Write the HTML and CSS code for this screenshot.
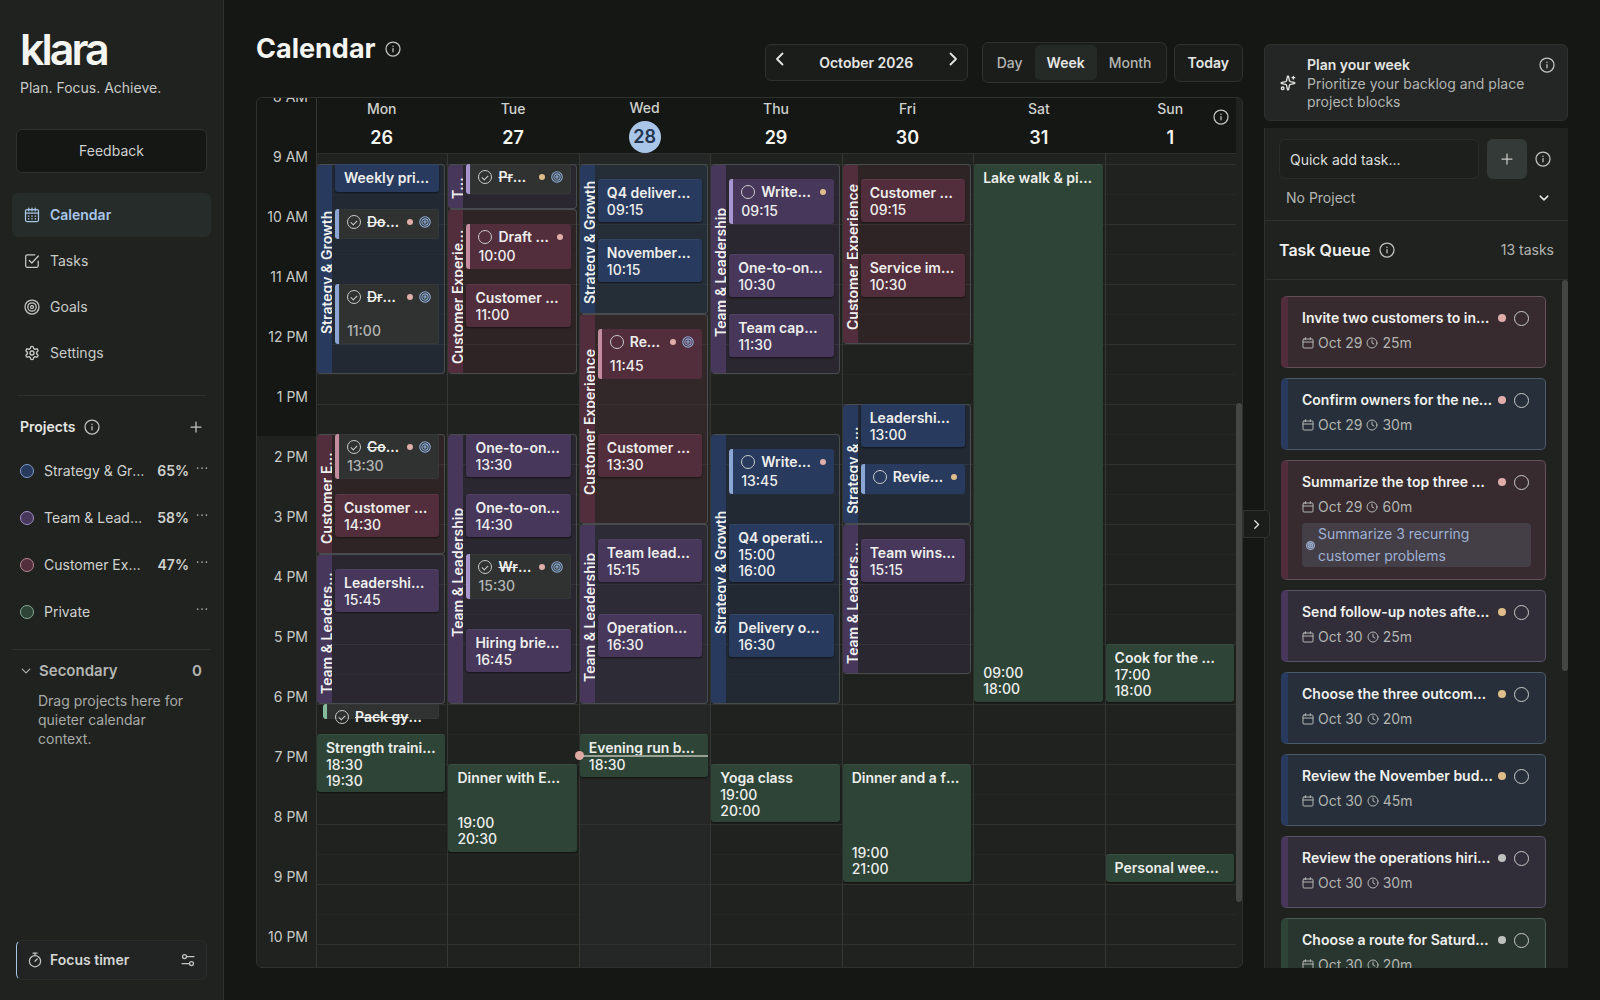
FILE: index.html
```html
<!DOCTYPE html>
<html lang="en">
<head>
<meta charset="utf-8">
<meta name="viewport" content="width=device-width, initial-scale=1">
<title>Klara – Calendar</title>
<link rel="stylesheet" href="styles.css">
</head>
<body>
<svg class="sprite" aria-hidden="true">
  <symbol id="i-info" viewBox="0 0 16 16"><circle cx="8" cy="8" r="7"/><path d="M8 7.5v3.3M8 5.2v.3"/></symbol>
  <symbol id="i-target" viewBox="0 0 16 16"><circle cx="8" cy="8" r="7"/><circle cx="8" cy="8" r="4.2"/><circle cx="8" cy="8" r="1.5"/></symbol>
  <symbol id="i-calendar" viewBox="0 0 16 16"><rect x="1.5" y="2.5" width="13" height="12" rx="1.5"/><path d="M1.5 6.2h13M4.8 1v3M8 1v3M11.2 1v3M4.3 9h.6M7.7 9h.6M11.1 9h.6M4.3 11.8h.6M7.7 11.8h.6M11.1 11.8h.6"/></symbol>
  <symbol id="i-check-square" viewBox="0 0 16 16"><path d="M14.2 8v4.8a1.5 1.5 0 0 1-1.5 1.5H3.2a1.5 1.5 0 0 1-1.5-1.5V3.3a1.5 1.5 0 0 1 1.5-1.5h7.6M5.3 7.5l2.5 2.5 6.6-7"/></symbol>
  <symbol id="i-gear" viewBox="0 0 24 24"><path d="M12.22 2h-.44a2 2 0 0 0-2 2v.18a2 2 0 0 1-1 1.73l-.43.25a2 2 0 0 1-2 0l-.15-.08a2 2 0 0 0-2.73.73l-.22.38a2 2 0 0 0 .73 2.73l.15.1a2 2 0 0 1 1 1.72v.51a2 2 0 0 1-1 1.74l-.15.09a2 2 0 0 0-.73 2.73l.22.38a2 2 0 0 0 2.73.73l.15-.08a2 2 0 0 1 2 0l.43.25a2 2 0 0 1 1 1.73V20a2 2 0 0 0 2 2h.44a2 2 0 0 0 2-2v-.18a2 2 0 0 1 1-1.73l.43-.25a2 2 0 0 1 2 0l.15.08a2 2 0 0 0 2.73-.73l.22-.39a2 2 0 0 0-.73-2.73l-.15-.08a2 2 0 0 1-1-1.74v-.5a2 2 0 0 1 1-1.74l.15-.09a2 2 0 0 0 .73-2.73l-.22-.38a2 2 0 0 0-2.73-.73l-.15.08a2 2 0 0 1-2 0l-.43-.25a2 2 0 0 1-1-1.73V4a2 2 0 0 0-2-2z"/><circle cx="12" cy="12" r="3"/></symbol>
  <symbol id="i-plus" viewBox="0 0 16 16"><path d="M8 3v10M3 8h10"/></symbol>
  <symbol id="i-left" viewBox="0 0 16 16"><path d="M10.5 2.5L5 8l5.5 5.5"/></symbol>
  <symbol id="i-right" viewBox="0 0 16 16"><path d="M5.5 2.5L11 8l-5.5 5.5"/></symbol>
  <symbol id="i-down" viewBox="0 0 16 16"><path d="M3 5.5l5 5 5-5"/></symbol>
  <symbol id="i-dots" viewBox="0 0 16 16"><circle cx="3" cy="8" r="1"/><circle cx="8" cy="8" r="1"/><circle cx="13" cy="8" r="1"/></symbol>
  <symbol id="i-timer" viewBox="0 0 16 16"><circle cx="8" cy="9.2" r="5.6"/><path d="M6 1.2h4M8 1.2v2.2M8 9.2l2.2-2.2"/></symbol>
  <symbol id="i-sliders" viewBox="0 0 16 16"><circle cx="4.5" cy="4.5" r="2"/><circle cx="11.5" cy="11.5" r="2"/><path d="M6.5 4.5H14M2 11.5h7.5"/></symbol>
  <symbol id="i-sparkles" viewBox="0 0 24 24"><path d="M11 2.8a1 1 0 0 1 2 0l1.1 5.6a2 2 0 0 0 1.5 1.5l5.6 1.1a1 1 0 0 1 0 2l-5.6 1.1a2 2 0 0 0-1.5 1.5L13 21.2a1 1 0 0 1-2 0l-1.1-5.6a2 2 0 0 0-1.5-1.5L2.8 13a1 1 0 0 1 0-2l5.6-1.1a2 2 0 0 0 1.5-1.5zM20 2v4M22 4h-4"/><circle cx="4" cy="20" r="2"/></symbol>
  <symbol id="i-date" viewBox="0 0 12 12"><rect x="1" y="2" width="10" height="9" rx="1"/><path d="M1 5h10M3.6.7v2M8.4.7v2"/></symbol>
  <symbol id="i-clock" viewBox="0 0 12 12"><circle cx="6" cy="6" r="5"/><path d="M6 3v3l2 1"/></symbol>
</svg>

<div class="app">
  <aside class="sidebar">
    <div class="brand">
      <div class="logo">klara</div>
      <p class="tagline">Plan. Focus. Achieve.</p>
    </div>
    <button class="feedback" type="button">Feedback</button>
    <nav class="nav" aria-label="Main">
      <a class="nav-item active" href="#calendar"><svg class="icon"><use href="#i-calendar"/></svg>Calendar</a>
      <a class="nav-item" href="#tasks"><svg class="icon"><use href="#i-check-square"/></svg>Tasks</a>
      <a class="nav-item" href="#goals"><svg class="icon"><use href="#i-target"/></svg>Goals</a>
      <a class="nav-item" href="#settings"><svg class="icon heavy"><use href="#i-gear"/></svg>Settings</a>
    </nav>
    <section class="projects">
      <header class="projects-head">
        <h2>Projects</h2>
        <button class="icon-btn" type="button" aria-label="About projects"><svg class="icon"><use href="#i-info"/></svg></button>
        <button class="icon-btn push" type="button" aria-label="Add project"><svg class="icon"><use href="#i-plus"/></svg></button>
      </header>
      <ul class="project-list">
        <li class="project blue"><span class="swatch"></span><span class="project-name">Strategy &amp; Growth</span><b>65%</b><button class="icon-btn more" type="button" aria-label="More"><svg class="icon"><use href="#i-dots"/></svg></button></li>
        <li class="project purple"><span class="swatch"></span><span class="project-name">Team &amp; Leadership</span><b>58%</b><button class="icon-btn more" type="button" aria-label="More"><svg class="icon"><use href="#i-dots"/></svg></button></li>
        <li class="project rose"><span class="swatch"></span><span class="project-name">Customer Experience</span><b>47%</b><button class="icon-btn more" type="button" aria-label="More"><svg class="icon"><use href="#i-dots"/></svg></button></li>
        <li class="project green"><span class="swatch"></span><span class="project-name">Private</span><button class="icon-btn more" type="button" aria-label="More"><svg class="icon"><use href="#i-dots"/></svg></button></li>
      </ul>
    </section>
    <section class="secondary">
      <button class="secondary-head" type="button"><svg class="icon small"><use href="#i-down"/></svg><span>Secondary</span><span class="push">0</span></button>
      <p>Drag projects here for quieter calendar context.</p>
    </section>
    <button class="focus" type="button"><svg class="icon"><use href="#i-timer"/></svg><span>Focus timer</span><svg class="icon push"><use href="#i-sliders"/></svg></button>
  </aside>

  <main class="main">
    <header class="topbar">
      <h1>Calendar</h1>
      <button class="icon-btn title-info" type="button" aria-label="About the calendar"><svg class="icon"><use href="#i-info"/></svg></button>
      <div class="controls">
        <div class="period">
          <button class="icon-btn" type="button" aria-label="Previous week"><svg class="icon bold"><use href="#i-left"/></svg></button>
          <span>October 2026</span>
          <button class="icon-btn" type="button" aria-label="Next week"><svg class="icon bold"><use href="#i-right"/></svg></button>
        </div>
        <div class="views">
          <button type="button">Day</button>
          <button type="button" class="on">Week</button>
          <button type="button">Month</button>
        </div>
        <button class="today-btn" type="button">Today</button>
      </div>
    </header>

    <section class="calendar" id="calendar">
      <div class="gutter">
        <div class="hours">
          <span>8 AM</span><span>9 AM</span><span>10 AM</span><span>11 AM</span><span>12 PM</span><span>1 PM</span><span>2 PM</span><span>3 PM</span><span>4 PM</span><span>5 PM</span><span>6 PM</span><span>7 PM</span><span>8 PM</span><span>9 PM</span><span>10 PM</span>
        </div>
      </div>
      <div class="week">
        <div class="day-heads">
          <div class="day-head"><span>Mon</span><b>26</b></div>
          <div class="day-head"><span>Tue</span><b>27</b></div>
          <div class="day-head today"><span>Wed</span><b>28</b></div>
          <div class="day-head"><span>Thu</span><b>29</b></div>
          <div class="day-head"><span>Fri</span><b>30</b></div>
          <div class="day-head"><span>Sat</span><b>31</b></div>
          <div class="day-head"><span>Sun</span><b>1</b><button class="icon-btn week-info" type="button" aria-label="About the week view"><svg class="icon"><use href="#i-info"/></svg></button></div>
        </div>
        <div class="days">
          <div class="day">
            <div class="block blue" style="grid-row:3 / span 42"><span>Strategy &amp; Growth</span></div>
            <div class="block rose" style="grid-row:57 / span 24"><span>Customer Experience</span></div>
            <div class="block purple" style="grid-row:81 / span 30"><span>Team &amp; Leadership</span></div>
            <article class="event blue" style="grid-row:3 / span 6"><h3>Weekly priorities</h3></article>
            <article class="task blue done" style="grid-row:12 / span 6"><div class="line"><input type="checkbox" checked aria-label="Done"><h3>Document the plan</h3><i class="dot high"></i><svg class="goal"><use href="#i-target"/></svg></div></article>
            <article class="task blue done" style="grid-row:27 / span 12"><div class="line"><input type="checkbox" checked aria-label="Done"><h3>Draft the roadmap</h3><i class="dot high"></i><svg class="goal"><use href="#i-target"/></svg></div><div class="times">11:00</div></article>
            <article class="task rose done" style="grid-row:57 / span 9"><div class="line"><input type="checkbox" checked aria-label="Done"><h3>Collect feedback</h3><i class="dot high"></i><svg class="goal"><use href="#i-target"/></svg></div><div class="times">13:30</div></article>
            <article class="event rose" style="grid-row:69 / span 9"><h3>Customer call</h3><div class="times">14:30</div></article>
            <article class="event purple" style="grid-row:84 / span 9"><h3>Leadership sync</h3><div class="times">15:45</div></article>
            <article class="task green done loose" style="grid-row:111 / span 3"><div class="line"><input type="checkbox" checked aria-label="Done"><h3>Pack gym bag today</h3></div></article>
            <article class="event green full" style="grid-row:117 / span 12"><h3>Strength training</h3><div class="times">18:30<br>19:30</div></article>
          </div>
          <div class="day">
            <div class="block purple" style="grid-row:3 / span 9"><span>Team &amp; Leadership</span></div>
            <div class="block rose" style="grid-row:12 / span 33"><span>Customer Experience</span></div>
            <div class="block purple" style="grid-row:57 / span 54"><span>Team &amp; Leadership</span></div>
            <article class="task purple done" style="grid-row:3 / span 6"><div class="line"><input type="checkbox" checked aria-label="Done"><h3>Prepare agenda</h3><i class="dot medium"></i><svg class="goal"><use href="#i-target"/></svg></div></article>
            <article class="task rose" style="grid-row:15 / span 9"><div class="line"><input type="checkbox" aria-label="Done"><h3>Draft survey</h3><i class="dot high"></i></div><div class="times">10:00</div></article>
            <article class="event rose" style="grid-row:27 / span 9"><h3>Customer review</h3><div class="times">11:00</div></article>
            <article class="event purple" style="grid-row:57 / span 9"><h3>One-to-one: Mia</h3><div class="times">13:30</div></article>
            <article class="event purple" style="grid-row:69 / span 9"><h3>One-to-one: Leo</h3><div class="times">14:30</div></article>
            <article class="task purple done" style="grid-row:81 / span 9"><div class="line"><input type="checkbox" checked aria-label="Done"><h3>Write update</h3><i class="dot high"></i><svg class="goal"><use href="#i-target"/></svg></div><div class="times">15:30</div></article>
            <article class="event purple" style="grid-row:96 / span 9"><h3>Hiring briefing</h3><div class="times">16:45</div></article>
            <article class="event green full" style="grid-row:123 / span 18"><h3>Dinner with Emma</h3><div class="times">19:00<br>20:30</div></article>
          </div>
          <div class="day today">
            <div class="block blue" style="grid-row:3 / span 30"><span>Strategy &amp; Growth</span></div>
            <div class="block rose" style="grid-row:33 / span 42"><span>Customer Experience</span></div>
            <div class="block purple" style="grid-row:75 / span 36"><span>Team &amp; Leadership</span></div>
            <article class="event blue" style="grid-row:6 / span 9"><h3>Q4 delivery review</h3><div class="times">09:15</div></article>
            <article class="event blue" style="grid-row:18 / span 9"><h3>November planning</h3><div class="times">10:15</div></article>
            <article class="task rose" style="grid-row:36 / span 10"><div class="line"><input type="checkbox" aria-label="Done"><h3>Review interviews</h3><i class="dot high"></i><svg class="goal"><use href="#i-target"/></svg></div><div class="times">11:45</div></article>
            <article class="event rose" style="grid-row:57 / span 9"><h3>Customer panel</h3><div class="times">13:30</div></article>
            <article class="event purple" style="grid-row:78 / span 9"><h3>Team leads sync</h3><div class="times">15:15</div></article>
            <article class="event purple" style="grid-row:93 / span 9"><h3>Operations review</h3><div class="times">16:30</div></article>
            <article class="event green full" style="grid-row:117 / span 9"><h3>Evening run by the lake</h3><div class="times">18:30</div></article>
            <div class="now" style="grid-row:121 / span 1"></div>
          </div>
          <div class="day">
            <div class="block purple" style="grid-row:3 / span 42"><span>Team &amp; Leadership</span></div>
            <div class="block blue" style="grid-row:57 / span 54"><span>Strategy &amp; Growth</span></div>
            <article class="task purple" style="grid-row:6 / span 9"><div class="line"><input type="checkbox" aria-label="Done"><h3>Write feedback</h3><i class="dot medium"></i></div><div class="times">09:15</div></article>
            <article class="event purple" style="grid-row:21 / span 9"><h3>One-to-one: Ava</h3><div class="times">10:30</div></article>
            <article class="event purple" style="grid-row:33 / span 9"><h3>Team capacity</h3><div class="times">11:30</div></article>
            <article class="task blue" style="grid-row:60 / span 9"><div class="line"><input type="checkbox" aria-label="Done"><h3>Write proposal</h3><i class="dot high"></i></div><div class="times">13:45</div></article>
            <article class="event blue" style="grid-row:75 / span 12"><h3>Q4 operating plan</h3><div class="times">15:00<br>16:00</div></article>
            <article class="event blue" style="grid-row:93 / span 9"><h3>Delivery outlook</h3><div class="times">16:30</div></article>
            <article class="event green full" style="grid-row:123 / span 12"><h3>Yoga class</h3><div class="times">19:00<br>20:00</div></article>
          </div>
          <div class="day">
            <div class="block rose" style="grid-row:3 / span 36"><span>Customer Experience</span></div>
            <div class="block blue" style="grid-row:51 / span 24"><span>Strategy &amp; Growth</span></div>
            <div class="block purple" style="grid-row:75 / span 30"><span>Team &amp; Leadership</span></div>
            <article class="event rose" style="grid-row:6 / span 9"><h3>Customer health</h3><div class="times">09:15</div></article>
            <article class="event rose" style="grid-row:21 / span 9"><h3>Service improvements</h3><div class="times">10:30</div></article>
            <article class="event blue" style="grid-row:51 / span 9"><h3>Leadership recap</h3><div class="times">13:00</div></article>
            <article class="task blue" style="grid-row:63 / span 6"><div class="line"><input type="checkbox" aria-label="Done"><h3>Review metrics</h3><i class="dot medium"></i></div></article>
            <article class="event purple" style="grid-row:78 / span 9"><h3>Team wins of the week</h3><div class="times">15:15</div></article>
            <article class="event green full" style="grid-row:123 / span 24"><h3>Dinner and a film</h3><div class="times">19:00<br>21:00</div></article>
          </div>
          <div class="day">
            <article class="event green full" style="grid-row:3 / span 108"><h3>Lake walk &amp; picnic</h3><div class="times">09:00<br>18:00</div></article>
          </div>
          <div class="day">
            <article class="event green full" style="grid-row:99 / span 12"><h3>Cook for the week</h3><div class="times">17:00<br>18:00</div></article>
            <article class="event green full" style="grid-row:141 / span 6"><h3>Personal weekly review</h3></article>
          </div>
        </div>
      </div>
      <div class="scroll"><i></i></div>
    </section>
  </main>

  <aside class="panel">
    <button class="collapse" type="button" aria-label="Collapse panel"><svg class="icon bold"><use href="#i-right"/></svg></button>
    <section class="plan">
      <svg class="icon heavy"><use href="#i-sparkles"/></svg>
      <div class="plan-text"><h2>Plan your week</h2><p>Prioritize your backlog and place project blocks</p></div>
      <button class="icon-btn" type="button" aria-label="About planning"><svg class="icon"><use href="#i-info"/></svg></button>
    </section>
    <section class="queue">
      <form class="quick">
        <div class="quick-row">
          <input type="text" placeholder="Quick add task..." aria-label="Quick add task">
          <button class="add" type="button" aria-label="Add task"><svg class="icon"><use href="#i-plus"/></svg></button>
          <button class="icon-btn" type="button" aria-label="About quick add"><svg class="icon"><use href="#i-info"/></svg></button>
        </div>
        <div class="select">
          <select aria-label="Project"><option>No Project</option><option>Strategy &amp; Growth</option><option>Team &amp; Leadership</option></select>
          <svg class="icon small bold"><use href="#i-down"/></svg>
        </div>
      </form>
      <header class="queue-head">
        <h2>Task Queue</h2>
        <button class="icon-btn" type="button" aria-label="About the queue"><svg class="icon"><use href="#i-info"/></svg></button>
        <span class="push">13 tasks</span>
      </header>
      <div class="queue-body">
        <ul class="cards">
          <li class="card rose"><div class="card-line"><h3>Invite two customers to interview</h3><i class="dot high"></i><input type="checkbox" aria-label="Done"></div><p class="meta"><svg><use href="#i-date"/></svg>Oct 29<svg><use href="#i-clock"/></svg>25m</p></li>
          <li class="card blue"><div class="card-line"><h3>Confirm owners for the next steps</h3><i class="dot high"></i><input type="checkbox" aria-label="Done"></div><p class="meta"><svg><use href="#i-date"/></svg>Oct 29<svg><use href="#i-clock"/></svg>30m</p></li>
          <li class="card rose"><div class="card-line"><h3>Summarize the top three matters</h3><i class="dot high"></i><input type="checkbox" aria-label="Done"></div><p class="meta"><svg><use href="#i-date"/></svg>Oct 29<svg><use href="#i-clock"/></svg>60m</p><a class="chip" href="#goals"><svg><use href="#i-target"/></svg><span>Summarize 3 recurring customer problems</span></a></li>
          <li class="card purple"><div class="card-line"><h3>Send follow-up notes after sync</h3><i class="dot medium"></i><input type="checkbox" aria-label="Done"></div><p class="meta"><svg><use href="#i-date"/></svg>Oct 30<svg><use href="#i-clock"/></svg>25m</p></li>
          <li class="card blue"><div class="card-line"><h3>Choose the three outcomes for Q4</h3><i class="dot medium"></i><input type="checkbox" aria-label="Done"></div><p class="meta"><svg><use href="#i-date"/></svg>Oct 30<svg><use href="#i-clock"/></svg>20m</p></li>
          <li class="card blue"><div class="card-line"><h3>Review the November budget</h3><i class="dot medium"></i><input type="checkbox" aria-label="Done"></div><p class="meta"><svg><use href="#i-date"/></svg>Oct 30<svg><use href="#i-clock"/></svg>45m</p></li>
          <li class="card purple"><div class="card-line"><h3>Review the operations hiring plan</h3><i class="dot low"></i><input type="checkbox" aria-label="Done"></div><p class="meta"><svg><use href="#i-date"/></svg>Oct 30<svg><use href="#i-clock"/></svg>30m</p></li>
          <li class="card green"><div class="card-line"><h3>Choose a route for Saturday walk</h3><i class="dot low"></i><input type="checkbox" aria-label="Done"></div><p class="meta"><svg><use href="#i-date"/></svg>Oct 30<svg><use href="#i-clock"/></svg>20m</p></li>
        </ul>
        <div class="queue-scroll"></div>
      </div>
    </section>
  </aside>
</div>
</body>
</html>
```
FILE: styles.css
```css
:root {
  --bg: #151714;
  --surface: #20221f;
  --line: #2e312e;
  --text: #e6e7e4;
  --muted: #b3b5b2;
  --accent: #a9c6e8;
}

* { box-sizing: border-box; }

body {
  margin: 0;
  background: var(--bg);
  color: var(--text);
  font: 400 14px/20px Inter, "Liberation Sans", sans-serif;
}

h1, h2, h3, p, ul { margin: 0; padding: 0; font-size: inherit; }
ul { list-style: none; }
a { color: inherit; text-decoration: none; }
button, input, select { font: inherit; color: inherit; margin: 0; }
button { background: none; border: 0; padding: 0; cursor: pointer; }

.sprite { display: none; }
svg { fill: none; stroke: currentColor; stroke-linecap: round; stroke-linejoin: round; flex: none; }
.icon { width: 16px; height: 16px; stroke-width: 1.25; display: block; }
.icon.small { width: 12px; height: 12px; stroke-width: 1.5; }
.icon.heavy { stroke-width: 2; }
.icon.bold { stroke-width: 1.8; }
.icon-btn { display: flex; color: #c3c5c2; }
.push { margin-left: auto; }

/* project palette */
.blue { --solid: #283a5d; --tint: rgb(40 64 110 / 25%); --bar: #8ba5d4; --card: #27303a; --ring: #7e9cd0; --card-line: #4b5a68; }
.rose { --solid: #522d3c; --tint: rgb(98 42 60 / 23%); --bar: #c48d9f; --card: #372b2f; --ring: #b98a97; --card-line: #63505a; }
.purple { --solid: #46375b; --tint: rgb(76 58 110 / 23%); --bar: #a896d0; --card: #312d39; --ring: #a18fc6; --card-line: #5a5368; }
.green { --solid: #2d4437; --tint: #2d4437; --bar: #86bb9d; --card: #29362f; --ring: #84ab94; --card-line: #4a5e53; }

.app { display: grid; grid-template-columns: 224px minmax(0, 1fr) 304px; height: 100vh; padding-right: 32px; }

/* sidebar */
.sidebar { display: flex; flex-direction: column; background: var(--surface); border-right: 1px solid var(--line); padding: 24px 12px 20px; min-height: 0; }
.brand { padding: 0 8px; }
.logo { font-size: 43px; line-height: 50px; font-weight: 600; letter-spacing: -3px; color: #f4f5f0; }
.tagline { margin-top: 4px; color: #c9cbc8; }
.feedback { margin: 31px 4px 0; height: 44px; flex: none; background: var(--bg); border: 1px solid var(--line); border-radius: 6px; color: #cfd1ce; }
.nav { display: flex; flex-direction: column; gap: 2px; margin-top: 20px; }
.nav-item { display: flex; align-items: center; gap: 10px; height: 44px; padding: 0 12px; border-radius: 6px; color: #c9cbc8; }
.nav-item.active { background: #262c29; color: var(--accent); font-weight: 600; }
.projects { margin: 20px 5px 0; border-top: 1px solid var(--line); }
.projects-head { display: flex; align-items: center; gap: 9px; padding: 21px 2px 10px 3px; }
.projects-head h2 { font-weight: 600; }
.project-list { margin-right: -3px; }
.project { display: flex; align-items: center; height: 47px; padding-left: 3px; color: #d0d2cf; }
.swatch { width: 14px; height: 14px; border-radius: 50%; background: var(--solid); border: 1px solid var(--ring); flex: none; }
.project-name { flex: 1; margin-left: 10px; width: 0; overflow: hidden; text-overflow: ellipsis; white-space: nowrap; }
.project b { font-weight: 600; margin-left: 12px; }
.more { margin-left: 6px; padding-bottom: 5px; color: #a8aaa7; }
.more .icon { width: 14px; height: 14px; fill: currentColor; stroke: none; }
.secondary { margin-top: 14px; border-top: 1px solid var(--line); color: var(--muted); }
.secondary-head { display: flex; align-items: center; gap: 7px; width: 100%; padding: 11px 9px 10px 8px; font-size: 15px; font-weight: 600; }
.secondary p { padding: 0 24px 0 26px; line-height: 19px; color: #a8aaa7; }
.focus { display: flex; align-items: center; gap: 7px; flex: none; height: 40px; margin: auto 4px 0; padding: 0 10px; background: #212423; border: 1px solid #2a2d2b; border-left-color: var(--accent); border-radius: 6px; font-weight: 600; color: #d6d8d5; }
.focus .icon { color: #c3c5c2; }

/* calendar header */
.main { display: flex; flex-direction: column; min-width: 0; min-height: 0; padding: 32px 21px 32px 32px; }
.topbar { display: flex; align-items: flex-start; margin-bottom: 14px; }
h1 { font-size: 27px; line-height: 34px; font-weight: 700; color: #f4f5f0; }
.title-info { margin: 9px 0 0 9px; }
.controls { display: flex; align-items: center; gap: 14px; margin: 10px 0 0 auto; font-weight: 600; }
.period { display: flex; justify-content: space-between; width: 203px; height: 37px; padding: 6px; background: #1b1d1b; border: 1px solid var(--line); border-radius: 6px; line-height: 24px; }
.period .icon-btn { color: var(--text); }
.views { display: flex; height: 41px; padding: 2px; background: #1b1d1b; border: 1px solid var(--line); border-radius: 6px; }
.views button { padding: 0 12px; border-radius: 5px; color: var(--muted); font-weight: 500; }
.views button.on { background: #252a27; color: var(--text); font-weight: 600; }
.today-btn { height: 38px; margin-left: -7px; padding: 0 13px; background: #1b1d1b; border: 1px solid var(--line); border-radius: 6px; font-weight: 600; }

/* week grid */
.calendar { display: flex; flex: 1; min-height: 0; border: 1px solid var(--line); border-radius: 6px; overflow: hidden; background: var(--surface); }
.gutter { flex: none; width: 59px; overflow: hidden; background: linear-gradient(var(--bg) 338px, var(--surface) 338px); }
.hours { display: flex; flex-direction: column; gap: 40px; margin-top: -11px; padding-right: 8px; text-align: right; color: #c9cbc8; }
.week { display: flex; flex-direction: column; flex: 1; min-width: 0; }
.day-heads { display: grid; grid-template-columns: repeat(7, minmax(0, 1fr)); height: 56px; flex: none; background: linear-gradient(#343734, #343734) 0 0 / 1px 100% no-repeat var(--bg); border-bottom: 1px solid var(--line); }
.day-head { position: relative; display: flex; flex-direction: column; align-items: center; justify-content: center; gap: 6px; font-weight: 500; line-height: 17px; color: #cfd1ce; }
.day-head b { display: grid; place-items: center; height: 28px; font-size: 18px; font-weight: 600; color: #f4f5f0; }
.day-head.today { gap: 5px; }
.day-head.today b { width: 32px; height: 32px; border-radius: 50%; background: var(--accent); color: #22344e; }
.week-info { position: absolute; top: 11px; right: 7px; }
.days { display: grid; grid-template-columns: repeat(7, minmax(0, 1fr)); flex: 1; min-height: 0; overflow: hidden; }
.day {
  display: grid;
  grid-template-columns: minmax(0, 1fr);
  grid-template-rows: repeat(163, 5px);
  border-left: 1px solid #343734;
  background:
    linear-gradient(#2f322f 1px, transparent 1px) 0 10px / 100% 60px,
    linear-gradient(#242724 1px, transparent 1px) 0 10px / 100% 30px;
}
.day.today { background-color: #242725; }
.day > * { grid-column: 1; min-height: 0; }
.block { display: flex; margin-right: 2px; border: 1px solid #494c4e; border-left: 0; border-radius: 4px; background: var(--tint); overflow: hidden; }
.block span { width: 15px; padding: 10px 0 16px; margin: -1px 0; background: var(--solid); writing-mode: vertical-rl; transform: rotate(180deg); text-align: center; line-height: 19px; font-weight: 600; white-space: nowrap; overflow: hidden; text-overflow: ellipsis; color: #f0f1ee; }

.event, .task { display: flex; flex-direction: column; justify-content: space-between; margin: 0 8px 2px 18px; border-radius: 3px; background: var(--solid); color: #eeefec; }
.event { padding: 5px 9px; box-shadow: 0 1px 2px rgb(0 0 0 / 50%), inset 0 1px 0 rgb(255 255 255 / 6%); }
.event.full { margin: 0 2px 2px 0; }
.event h3, .task h3 { font-weight: 600; line-height: 18px; white-space: nowrap; overflow: hidden; text-overflow: ellipsis; flex: none; }
.times { line-height: 16px; font-weight: 500; flex: none; }
.task { padding: 4px 8px 5px; margin-bottom: 0; border-left: 4px solid var(--bar); }
.task .line { display: flex; align-items: center; gap: 6px; }
.task h3 { flex: 1; min-width: 0; }
.task.done { background: #303232; box-shadow: inset 0 0 0 1px #363838; }
.task.done h3 { text-decoration: line-through; }
.task.done .times { color: var(--muted); }
.task.loose { margin: 0 8px 0 6px; }
.goal { width: 12px; height: 12px; stroke-width: 1.4; color: #8fb0dc; }
.dot { width: 6px; height: 6px; border-radius: 50%; flex: none; }
.high { background: #e0aeaa; }
.medium { background: #dfbd8a; }
.low { background: #bfc1be; }

input[type="checkbox"] { appearance: none; flex: none; display: grid; place-items: center; width: 14px; height: 14px; border: 1px solid #c9cbc8; border-radius: 50%; }
input[type="checkbox"]:checked::after { content: ""; width: 5px; height: 3px; border: solid #c9cbc8; border-width: 0 0 1px 1px; transform: rotate(-45deg); }

.now { position: relative; height: 2px; margin: 1px 2px 0 0; background: #98a193; }
.now::before { content: ""; position: absolute; left: -5px; top: -4px; width: 9px; height: 9px; border-radius: 50%; background: #e0a9a2; }
.scroll { flex: none; width: 6px; }
.scroll i { display: block; height: 499px; margin-top: 305px; border-radius: 3px; background: #434643; }

/* right panel */
.panel { position: relative; display: flex; flex-direction: column; gap: 7px; padding: 44px 0 32px; min-height: 0; }
.collapse { position: absolute; left: -21px; top: 510px; display: grid; place-items: center; width: 27px; height: 28px; background: #1b1d1b; border: 1px solid var(--line); border-radius: 0 5px 5px 0; }
.collapse .icon { width: 11px; height: 11px; }
.plan { display: flex; gap: 11px; padding: 10px 12px 9px 15px; background: #232625; border: 1px solid var(--line); border-radius: 6px; }
.plan > .icon { align-self: center; }
.plan-text { flex: 1; }
.plan h2 { font-weight: 600; line-height: 20px; }
.plan p { color: var(--muted); line-height: 18px; }
.plan .icon-btn { align-self: flex-start; padding-top: 2px; }
.queue { display: flex; flex-direction: column; flex: 1; min-height: 0; background: var(--surface); border-left: 1px solid var(--line); }
.quick { padding: 11px 17px 3px 14px; border-bottom: 1px solid var(--line); }
.quick-row { display: flex; align-items: center; gap: 8px; }
.quick-row input { flex: 1; min-width: 0; height: 40px; padding: 0 10px; background: #1d1f1d; border: 1px solid #292c29; border-radius: 6px; }
.quick-row input::placeholder { color: #dcdedb; opacity: 1; }
.add { display: grid; place-items: center; width: 40px; height: 40px; border-radius: 6px; background: #343a37; color: #c9cbc8; }
.select { display: grid; align-items: center; height: 38px; }
.select > * { grid-area: 1 / 1; }
.select select { appearance: none; width: 100%; padding: 0 7px; background: none; border: 0; color: var(--muted); }
.select .icon { justify-self: end; margin-right: 1px; pointer-events: none; stroke-width: 2; }
.queue-head { display: flex; align-items: center; gap: 9px; height: 59px; padding: 0 14px; border-bottom: 1px solid var(--line); color: var(--muted); }
.queue-head h2 { font-size: 16px; font-weight: 600; color: #f0f1ee; }
.queue-body { display: flex; flex: 1; min-height: 0; overflow: hidden; }
.queue-scroll { width: 6px; height: 391px; border-radius: 3px; background: #434643; }
.cards { display: flex; flex-direction: column; gap: 10px; flex: 1; min-width: 0; padding: 16px 16px 0; }
.card { flex: none; min-height: 72px; padding: 11px 14px 12px; background: var(--card); border: 1px solid var(--card-line); border-left: 7px solid var(--solid); border-radius: 5px; }
.card-line { display: flex; align-items: center; gap: 4px; padding-right: 2px; }
.card h3 { flex: 1; min-width: 0; font-weight: 600; white-space: nowrap; overflow: hidden; text-overflow: ellipsis; color: #f0f1ee; }
.card .dot { width: 8px; height: 8px; margin-right: 4px; }
.card input { width: 15px; height: 15px; }
.meta { display: flex; align-items: center; gap: 4px; margin-top: 5px; color: var(--muted); }
.meta svg { width: 12px; height: 12px; }
.chip { display: flex; align-items: center; gap: 3px; margin-top: 6px; padding: 0 4px; border-radius: 4px; background: rgb(120 130 160 / 22%); color: #9fb1d3; line-height: 22px; }
.chip svg { width: 9px; height: 9px; stroke-width: 2; }
```
